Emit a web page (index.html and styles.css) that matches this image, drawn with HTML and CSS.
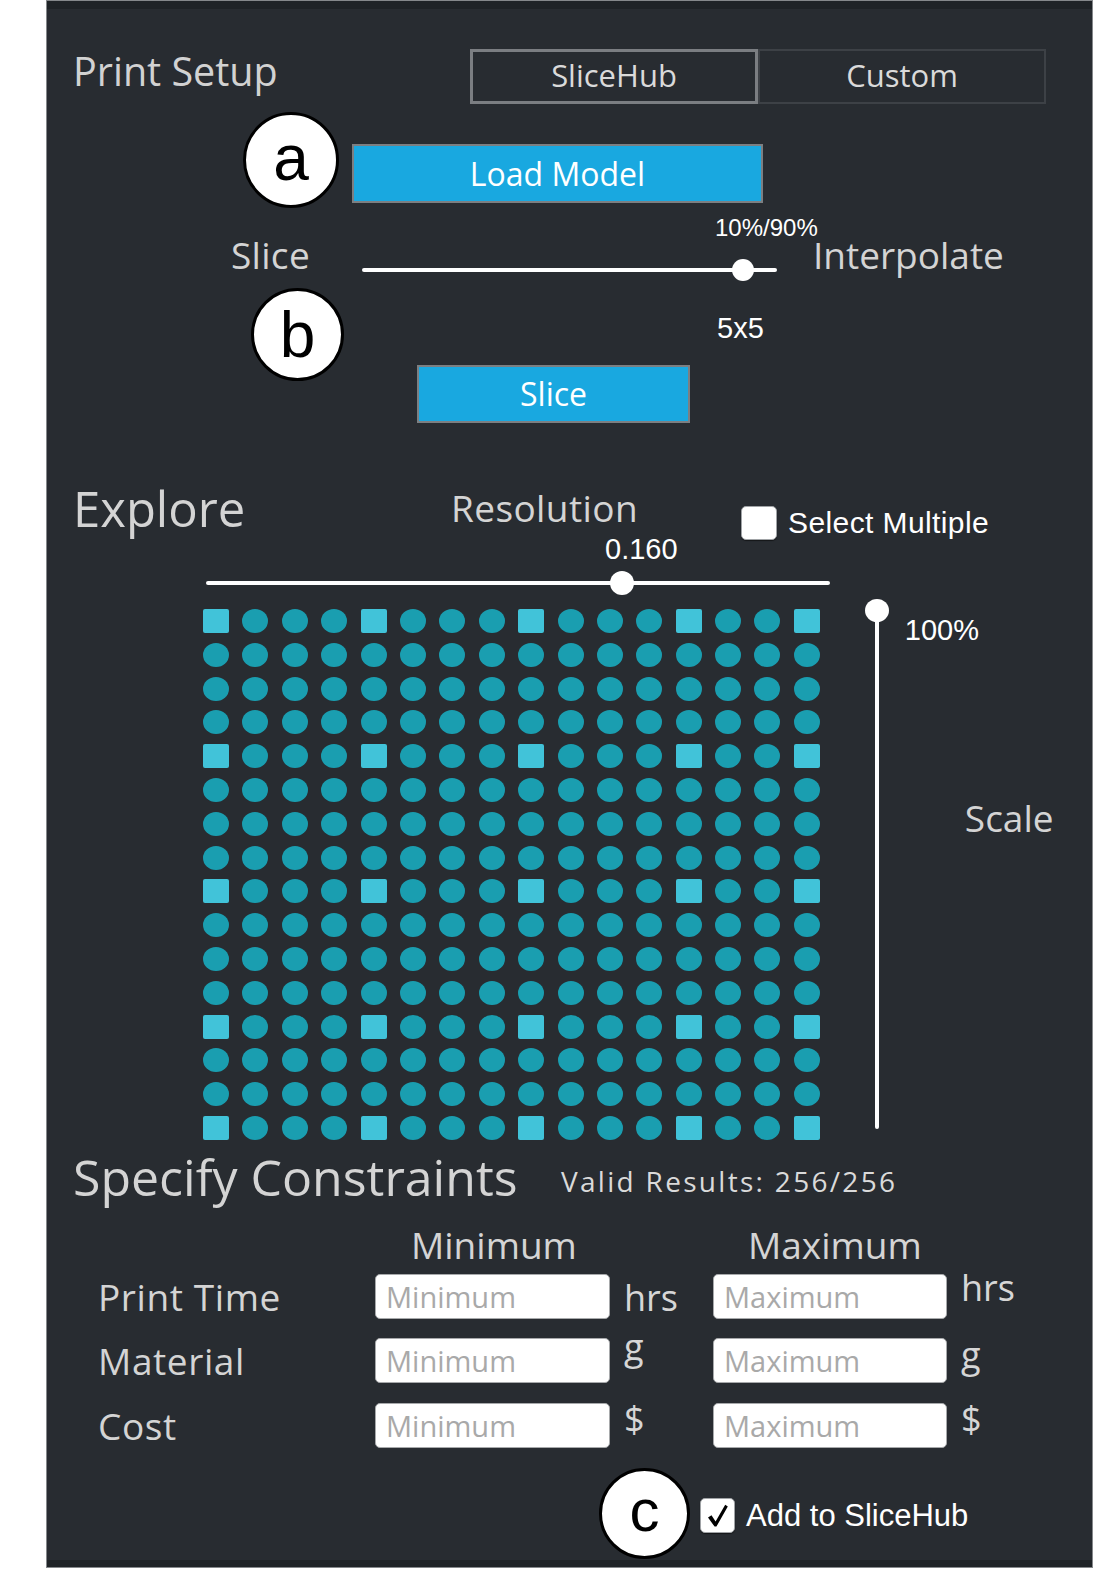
FILE: index.html
```html
<!DOCTYPE html>
<html>
<head>
<meta charset="utf-8">
<title>Print Setup</title>
<link rel="stylesheet" href="styles.css">
</head>
<body>
<div class="panel">
  <div class="topstrip"></div>

  <div class="setup-head">
    <div class="title-col"><h1 class="h-print">Print Setup</h1></div>
    <div class="tabs">
      <div class="tab tab-active">SliceHub</div>
      <div class="tab">Custom</div>
    </div>
  </div>

  <div class="btn btn-load">Load Model</div>

  <div class="slice-row">
    <div class="lbl lbl-slice">Slice</div>
    <div class="hslider hslider-slice">
      <div class="val val-top">10%/90%</div>
      <div class="track-wrap"><div class="track"></div><div class="knob knob-slice"></div></div>
      <div class="val val-bottom">5x5</div>
    </div>
    <div class="lbl lbl-interp">Interpolate</div>
  </div>

  <div class="btn btn-slice">Slice</div>

  <div class="explore-head">
    <h2 class="h-explore">Explore</h2>
    <div class="lbl lbl-res">Resolution</div>
    <div class="check-row">
      <span class="checkbox"></span>
      <span class="check-text">Select Multiple</span>
    </div>
  </div>

  <div class="hslider hslider-res">
    <div class="val val-res">0.160</div>
    <div class="track-wrap"><div class="track"></div><div class="knob knob-res"></div></div>
  </div>

  <div class="explore-body">
    <div class="dots">
      <i class="s"></i><i class="d"></i><i class="d"></i><i class="d"></i><i class="s"></i><i class="d"></i><i class="d"></i><i class="d"></i><i class="s"></i><i class="d"></i><i class="d"></i><i class="d"></i><i class="s"></i><i class="d"></i><i class="d"></i><i class="s"></i>
      <i class="d"></i><i class="d"></i><i class="d"></i><i class="d"></i><i class="d"></i><i class="d"></i><i class="d"></i><i class="d"></i><i class="d"></i><i class="d"></i><i class="d"></i><i class="d"></i><i class="d"></i><i class="d"></i><i class="d"></i><i class="d"></i>
      <i class="d"></i><i class="d"></i><i class="d"></i><i class="d"></i><i class="d"></i><i class="d"></i><i class="d"></i><i class="d"></i><i class="d"></i><i class="d"></i><i class="d"></i><i class="d"></i><i class="d"></i><i class="d"></i><i class="d"></i><i class="d"></i>
      <i class="d"></i><i class="d"></i><i class="d"></i><i class="d"></i><i class="d"></i><i class="d"></i><i class="d"></i><i class="d"></i><i class="d"></i><i class="d"></i><i class="d"></i><i class="d"></i><i class="d"></i><i class="d"></i><i class="d"></i><i class="d"></i>
      <i class="s"></i><i class="d"></i><i class="d"></i><i class="d"></i><i class="s"></i><i class="d"></i><i class="d"></i><i class="d"></i><i class="s"></i><i class="d"></i><i class="d"></i><i class="d"></i><i class="s"></i><i class="d"></i><i class="d"></i><i class="s"></i>
      <i class="d"></i><i class="d"></i><i class="d"></i><i class="d"></i><i class="d"></i><i class="d"></i><i class="d"></i><i class="d"></i><i class="d"></i><i class="d"></i><i class="d"></i><i class="d"></i><i class="d"></i><i class="d"></i><i class="d"></i><i class="d"></i>
      <i class="d"></i><i class="d"></i><i class="d"></i><i class="d"></i><i class="d"></i><i class="d"></i><i class="d"></i><i class="d"></i><i class="d"></i><i class="d"></i><i class="d"></i><i class="d"></i><i class="d"></i><i class="d"></i><i class="d"></i><i class="d"></i>
      <i class="d"></i><i class="d"></i><i class="d"></i><i class="d"></i><i class="d"></i><i class="d"></i><i class="d"></i><i class="d"></i><i class="d"></i><i class="d"></i><i class="d"></i><i class="d"></i><i class="d"></i><i class="d"></i><i class="d"></i><i class="d"></i>
      <i class="s"></i><i class="d"></i><i class="d"></i><i class="d"></i><i class="s"></i><i class="d"></i><i class="d"></i><i class="d"></i><i class="s"></i><i class="d"></i><i class="d"></i><i class="d"></i><i class="s"></i><i class="d"></i><i class="d"></i><i class="s"></i>
      <i class="d"></i><i class="d"></i><i class="d"></i><i class="d"></i><i class="d"></i><i class="d"></i><i class="d"></i><i class="d"></i><i class="d"></i><i class="d"></i><i class="d"></i><i class="d"></i><i class="d"></i><i class="d"></i><i class="d"></i><i class="d"></i>
      <i class="d"></i><i class="d"></i><i class="d"></i><i class="d"></i><i class="d"></i><i class="d"></i><i class="d"></i><i class="d"></i><i class="d"></i><i class="d"></i><i class="d"></i><i class="d"></i><i class="d"></i><i class="d"></i><i class="d"></i><i class="d"></i>
      <i class="d"></i><i class="d"></i><i class="d"></i><i class="d"></i><i class="d"></i><i class="d"></i><i class="d"></i><i class="d"></i><i class="d"></i><i class="d"></i><i class="d"></i><i class="d"></i><i class="d"></i><i class="d"></i><i class="d"></i><i class="d"></i>
      <i class="s"></i><i class="d"></i><i class="d"></i><i class="d"></i><i class="s"></i><i class="d"></i><i class="d"></i><i class="d"></i><i class="s"></i><i class="d"></i><i class="d"></i><i class="d"></i><i class="s"></i><i class="d"></i><i class="d"></i><i class="s"></i>
      <i class="d"></i><i class="d"></i><i class="d"></i><i class="d"></i><i class="d"></i><i class="d"></i><i class="d"></i><i class="d"></i><i class="d"></i><i class="d"></i><i class="d"></i><i class="d"></i><i class="d"></i><i class="d"></i><i class="d"></i><i class="d"></i>
      <i class="d"></i><i class="d"></i><i class="d"></i><i class="d"></i><i class="d"></i><i class="d"></i><i class="d"></i><i class="d"></i><i class="d"></i><i class="d"></i><i class="d"></i><i class="d"></i><i class="d"></i><i class="d"></i><i class="d"></i><i class="d"></i>
      <i class="s"></i><i class="d"></i><i class="d"></i><i class="d"></i><i class="s"></i><i class="d"></i><i class="d"></i><i class="d"></i><i class="s"></i><i class="d"></i><i class="d"></i><i class="d"></i><i class="s"></i><i class="d"></i><i class="d"></i><i class="s"></i>
    </div>
    <div class="vslider"><div class="vtrack"></div><div class="vknob"></div></div>
    <div class="scale-col">
      <div class="val val-scale">100%</div>
      <div class="lbl lbl-scale">Scale</div>
    </div>
  </div>

  <div class="constraints-head">
    <h2 class="h-spec">Specify Constraints</h2>
    <div class="valid">Valid Results: 256/256</div>
  </div>

  <div class="cols-head">
    <div class="lbl col-min">Minimum</div>
    <div class="lbl col-max">Maximum</div>
  </div>

  <div class="cgrid">
    <div class="lbl rlabel">Print Time</div>
    <input class="field" type="text" placeholder="Minimum">
    <div class="unit u-minhrs">hrs</div>
    <input class="field field-max" type="text" placeholder="Maximum">
    <div class="unit u-maxhrs">hrs</div>

    <div class="lbl rlabel">Material</div>
    <input class="field" type="text" placeholder="Minimum">
    <div class="unit u-ming">g</div>
    <input class="field field-max" type="text" placeholder="Maximum">
    <div class="unit u-maxg">g</div>

    <div class="lbl rlabel">Cost</div>
    <input class="field" type="text" placeholder="Minimum">
    <div class="unit u-cost">$</div>
    <input class="field field-max" type="text" placeholder="Maximum">
    <div class="unit u-cost">$</div>
  </div>

  <div class="add-row">
    <span class="checkbox checkbox-on"><svg width="35" height="35" viewBox="0 0 35 35"><path d="M8 19.5 L11.5 17.2 L15.6 23.6 L25.2 6.8 L27.8 8.4 L16.4 28.6 L14.6 28.6 Z" fill="#000"/></svg></span>
    <span class="add-text">Add to SliceHub</span>
  </div>

  <div class="bottomstrip"></div>

  <div class="badge badge-a">a</div>
  <div class="badge badge-b">b</div>
  <div class="badge badge-c">c</div>
</div>
</body>
</html>
```

FILE: styles.css
```css
html, body {
  margin: 0;
  padding: 0;
  background: #ffffff;
}

body {
  font-family: "Open Sans", "Liberation Sans", sans-serif;
  width: 1095px;
  height: 1575px;
  overflow: hidden;
}

.panel {
  position: relative;
  width: 1047px;
  height: 1568px;
  margin-left: 46px;
  box-sizing: border-box;
  border: 1px solid #85888b;
  background: #282c31;
  display: flex;
  flex-direction: column;
  align-items: flex-start;
  color: #d4d4d4;
}

.topstrip {
  flex: none;
  align-self: stretch;
  height: 8px;
  background: #1f2327;
}

.bottomstrip {
  flex: none;
  align-self: stretch;
  height: 7px;
  margin-top: auto;
  background: #1f2327;
}

/* generic text */
.lbl {
  font-family: "Open Sans", sans-serif;
  font-size: 37px;
  line-height: 40px;
  color: #d4d4d4;
  white-space: nowrap;
}

.val {
  font-family: "Liberation Sans", Arial, sans-serif;
  color: #ffffff;
  white-space: nowrap;
}

/* print setup header */
.setup-head {
  flex: none;
  display: flex;
  align-items: flex-start;
  margin-top: 40px;
  height: 55px;
}

.title-col {
  width: 397px;
  padding-left: 26px;
}

.h-print {
  margin: 0;
  font-size: 39.5px;
  line-height: 45px;
  font-weight: 400;
  color: #d2d2d2;
  white-space: nowrap;
}

.tabs {
  display: flex;
}

.tab {
  box-sizing: border-box;
  width: 288px;
  height: 55px;
  border: 2px solid #3d4146;
  display: flex;
  align-items: center;
  justify-content: center;
  padding-bottom: 4px;
  font-size: 31px;
  line-height: 38px;
  color: #dadada;
}

.tab-active {
  border: 3px solid #7b7e82;
}

/* buttons */
.btn {
  flex: none;
  box-sizing: border-box;
  display: flex;
  align-items: center;
  justify-content: center;
  background: #19a8e0;
  border: 2px solid #7c7f82;
  color: #ffffff;
  font-size: 32px;
  line-height: 40px;
}

.btn-load {
  margin-top: 40px;
  margin-left: 305px;
  width: 411px;
  height: 59px;
}

.btn-slice {
  margin-top: 22px;
  margin-left: 370px;
  width: 273px;
  height: 58px;
}

/* slice slider row */
.slice-row {
  flex: none;
  display: flex;
  align-items: flex-start;
  margin-top: 13px;
}

.lbl-slice {
  margin-left: 184px;
  margin-top: 19px;
  width: 131px;
  letter-spacing: 0.3px;
}

.hslider {
  display: flex;
  flex-direction: column;
  align-items: flex-start;
}

.hslider-slice {
  width: 415px;
}

.val-top {
  margin-left: 353px;
  font-size: 24px;
  line-height: 24px;
}

.val-bottom {
  margin-top: 32px;
  margin-left: 355px;
  font-size: 29px;
  line-height: 29px;
}

.track-wrap {
  position: relative;
  align-self: stretch;
  height: 24px;
  margin-top: 18px;
}

.track {
  margin-top: 10px;
  height: 4px;
  border-radius: 2px;
  background: #ffffff;
}

.knob {
  position: absolute;
  top: 1px;
  width: 22px;
  height: 22px;
  border-radius: 50%;
  background: #ffffff;
}

.knob-slice {
  left: 370px;
}

.lbl-interp {
  margin-left: 36px;
  margin-top: 19px;
}

/* explore */
.explore-head {
  flex: none;
  display: flex;
  align-items: flex-start;
  margin-top: 59px;
  height: 53px;
}

.h-explore {
  margin: 0 0 0 26px;
  width: 378px;
  font-size: 49px;
  line-height: 52px;
  font-weight: 400;
  color: #d4d4d4;
}

.lbl-res {
  margin-top: 6px;
  width: 290px;
  letter-spacing: 0.4px;
}

.check-row {
  margin-top: 24px;
  display: flex;
  align-items: center;
  gap: 11px;
  height: 34px;
}

.checkbox {
  display: block;
  box-sizing: border-box;
  width: 36px;
  height: 34px;
  border-radius: 5px;
  background: #ffffff;
  border: 1px solid #a0a3a6;
  box-shadow: 0 1px 1px rgba(0, 0, 0, 0.5);
}

.check-text {
  font-family: "Liberation Sans", Arial, sans-serif;
  font-size: 30px;
  line-height: 34px;
  letter-spacing: 0.4px;
  color: #ffffff;
}

.hslider-res {
  flex: none;
  margin-left: 159px;
  width: 624px;
}

.val-res {
  margin-left: 399px;
  font-size: 29px;
  line-height: 29px;
}

.hslider-res .track-wrap {
  margin-top: 7px;
}

.knob-res {
  left: 404px;
  top: 0;
  width: 24px;
  height: 24px;
}

.explore-body {
  flex: none;
  display: flex;
  align-items: flex-start;
  margin-top: 14px;
}

.dots {
  margin-left: 156px;
  display: grid;
  grid-template-columns: repeat(16, 26px);
  grid-template-rows: repeat(16, 24px);
  column-gap: 13.4px;
  row-gap: 9.8px;
}

.dots i {
  display: block;
}

.dots .d {
  background: #1a9eb0;
  border-radius: 50%;
}

.dots .s {
  background: #41c3d9;
  border-radius: 2px;
}

.vslider {
  position: relative;
  margin-left: 45px;
  margin-top: -10px;
  width: 24px;
  height: 530px;
  display: flex;
  justify-content: center;
}

.vtrack {
  width: 4px;
  height: 518px;
  margin-top: 12px;
  border-radius: 2px;
  background: #ffffff;
}

.vknob {
  position: absolute;
  top: 0;
  left: 0;
  width: 24px;
  height: 23px;
  border-radius: 50%;
  background: #ffffff;
}

.scale-col {
  margin-left: 16px;
  margin-top: 7px;
  display: flex;
  flex-direction: column;
  align-items: flex-start;
}

.val-scale {
  font-size: 29px;
  line-height: 29px;
}

.lbl-scale {
  margin-left: 60px;
  margin-top: 153px;
}

/* constraints */
.constraints-head {
  flex: none;
  display: flex;
  align-items: flex-start;
  margin-top: 10px;
}

.h-spec {
  margin: 0 0 0 26px;
  width: 488px;
  font-size: 50px;
  line-height: 54px;
  font-weight: 400;
  color: #d4d4d4;
  white-space: nowrap;
}

.valid {
  margin-top: 15px;
  font-size: 28px;
  line-height: 32px;
  letter-spacing: 2.3px;
  color: #dadada;
  white-space: nowrap;
}

.cols-head {
  flex: none;
  display: flex;
  margin-top: 21px;
  margin-left: 364px;
}

.col-min {
  width: 337px;
}

.cgrid {
  flex: none;
  display: grid;
  grid-template-columns: 328px 235px 103px 234px 100px;
  grid-template-rows: repeat(3, 45px);
  row-gap: 19.5px;
  margin-top: 9px;
}

.rlabel {
  padding-left: 51px;
  line-height: 45px;
  letter-spacing: 0.6px;
}

.field {
  box-sizing: border-box;
  width: 235px;
  height: 45px;
  margin: 0;
  padding: 0 0 0 10px;
  border: 1px solid #a7a9ab;
  border-radius: 5px;
  background: #ffffff;
  font-family: "Open Sans", sans-serif;
  font-size: 29px;
  color: #333333;
  outline: none;
}

.field-max {
  width: 234px;
}

.field::placeholder {
  color: #a9a9a9;
}

.unit {
  padding-left: 14px;
  font-size: 36px;
  line-height: 45px;
  color: #d6d6d6;
}

.u-minhrs { margin-top: 1px; }
.u-maxhrs { margin-top: -9px; }
.u-ming { margin-top: -14px; }
.u-maxg { margin-top: -6px; }
.u-cost { margin-top: -7px; }

/* add to slicehub */
.add-row {
  flex: none;
  display: flex;
  align-items: center;
  gap: 11px;
  margin-top: 50px;
  margin-left: 653px;
  height: 35px;
}

.checkbox-on {
  width: 35px;
  height: 35px;
}

.checkbox-on svg {
  display: block;
  margin: -1px;
}

.add-text {
  font-family: "Liberation Sans", Arial, sans-serif;
  font-size: 31px;
  line-height: 35px;
  color: #ffffff;
  white-space: nowrap;
}

/* annotation badges */
.badge {
  position: absolute;
  box-sizing: border-box;
  border-radius: 50%;
  background: #ffffff;
  border: 3.5px solid #000000;
  display: flex;
  align-items: center;
  justify-content: center;
  font-family: "Liberation Sans", Arial, sans-serif;
  font-size: 64px;
  line-height: 64px;
  color: #000000;
}

.badge-a {
  left: 196px;
  top: 111px;
  width: 96px;
  height: 96px;
  padding-bottom: 4px;
}

.badge-b {
  left: 204px;
  top: 287px;
  width: 93px;
  height: 93px;
}

.badge-c {
  left: 552px;
  top: 1467px;
  width: 91px;
  height: 91px;
  font-size: 60px;
  padding-bottom: 6px;
}
```
